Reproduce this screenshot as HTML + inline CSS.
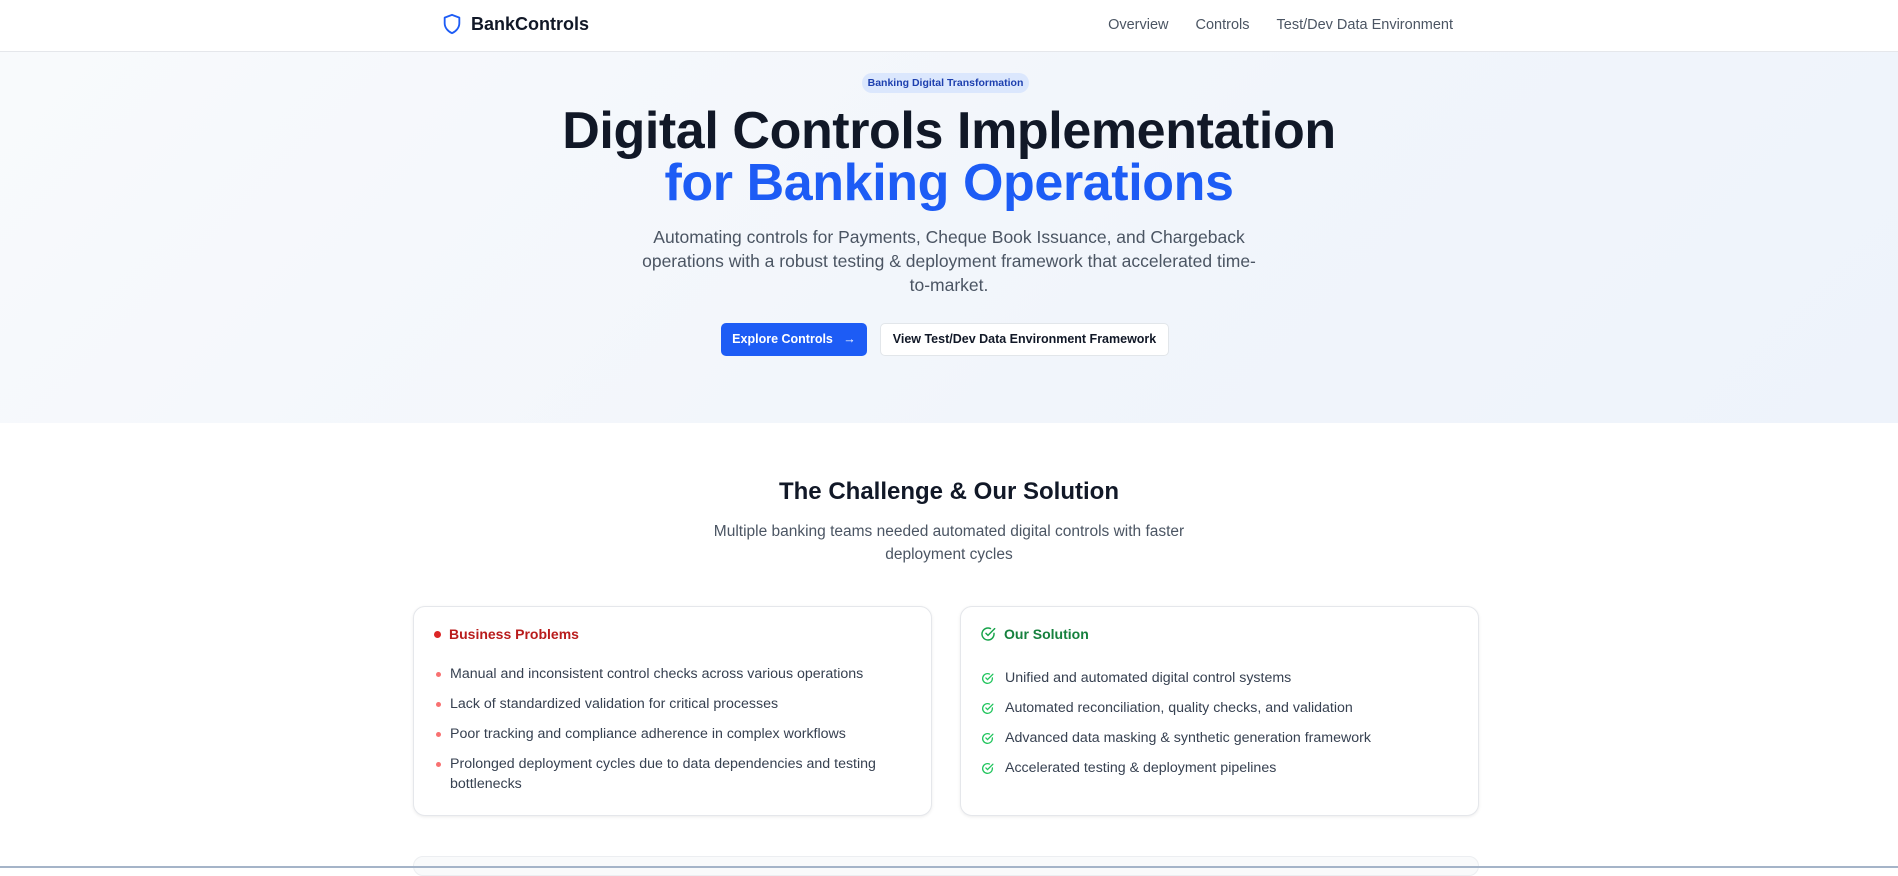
<!DOCTYPE html>
<html><head><meta charset="utf-8"><style>
*{box-sizing:border-box;margin:0;padding:0}
body{width:1898px;height:868px;overflow:hidden;font-family:"Liberation Sans",sans-serif;background:#fff;color:#111827;position:relative}
.nav{height:52px;border-bottom:1px solid #e5e7eb;background:#fff;position:relative}
.logo{position:absolute;left:441px;top:12px;display:flex;align-items:center;gap:8px;font-weight:700;font-size:18px;color:#111827}
.links{position:absolute;right:445px;top:17px;display:flex;gap:27px;font-size:14.5px;color:#4b5563}
.hero{height:371px;background:linear-gradient(135deg,#f8fafc 0%,#f1f5fb 60%,#eef3fb 100%);text-align:center;position:relative}
.badge{position:absolute;left:862px;top:21px;width:167px;height:20px;border-radius:10px;background:#dbe7fd;color:#1e40af;font-size:10.5px;font-weight:700;line-height:20px}
h1{position:absolute;left:0;right:0;top:53px;font-size:52px;line-height:52px;font-weight:700;color:#111827;letter-spacing:-0.4px}
h1 span{color:#1d5cf5}
.sub{position:absolute;left:600px;width:698px;top:173px;font-size:17.5px;line-height:24px;color:#4b5563}
.btn1{position:absolute;left:721px;top:271px;width:146px;height:33px;border-radius:5px;background:#1d5cf5;color:#fff;font-size:12.5px;font-weight:700;line-height:33px}
.btn2{position:absolute;left:880px;top:271px;width:289px;height:33px;border-radius:5px;background:#fff;border:1px solid #e2e6ea;color:#111827;font-size:12.5px;font-weight:700;line-height:31px}
h2{position:absolute;left:0;right:0;top:478px;font-size:24px;font-weight:700;text-align:center}
.s2{position:absolute;left:690px;width:518px;top:520px;font-size:15.5px;line-height:23px;color:#4b5563;text-align:center}
.card{position:absolute;top:606px;height:210px;width:519px;border:1px solid #e5e7eb;border-radius:12px;background:#fff;box-shadow:0 1px 3px rgba(0,0,0,.08)}
.card h3{position:absolute;left:36px;top:19px;font-size:14px;font-weight:700;display:flex;align-items:center;gap:8px}
.card ul{list-style:none;position:absolute;left:20px;top:57px;width:470px}
.card li{font-size:14.2px;line-height:20px;color:#374151;padding-left:16px;position:relative;margin-bottom:10px}
.l li::before{content:"";position:absolute;left:2px;top:8px;width:5px;height:5px;border-radius:50%;background:#f87171}
.r li{padding-left:24px}
.r li svg{position:absolute;left:0;top:4px}
</style></head><body>
<div class="nav">
<div class="logo"><svg width="22" height="24" viewBox="0 0 24 24" fill="none" stroke="#1d5cf5" stroke-width="2" stroke-linejoin="round"><path d="M12 2 4 5v6c0 5 3.5 9 8 11 4.5-2 8-6 8-11V5z"/></svg>BankControls</div>
<div class="links"><span>Overview</span><span>Controls</span><span>Test/Dev Data Environment</span></div>
</div>
<div class="hero">
<div class="badge">Banking Digital Transformation</div>
<h1>Digital Controls Implementation<br><span>for Banking Operations</span></h1>
<div class="sub">Automating controls for Payments, Cheque Book Issuance, and Chargeback<br>operations with a robust testing &amp; deployment framework that accelerated time-<br>to-market.</div>
<div class="btn1">Explore Controls &nbsp;&nbsp;→</div>
<div class="btn2">View Test/Dev Data Environment Framework</div>
</div>
<h2>The Challenge &amp; Our Solution</h2>
<div class="s2">Multiple banking teams needed automated digital controls with faster deployment cycles</div>
<div class="card l" style="left:413px">
<h3 style="color:#b91c1c;left:20px"><span style="width:7px;height:7px;border-radius:50%;background:#dc2626;display:inline-block"></span>Business Problems</h3>
<ul style="top:57px">
<li>Manual and inconsistent control checks across various operations</li>
<li>Lack of standardized validation for critical processes</li>
<li>Poor tracking and compliance adherence in complex workflows</li>
<li>Prolonged deployment cycles due to data dependencies and testing bottlenecks</li>
</ul></div>
<div class="card r" style="left:960px">
<h3 style="color:#15803d;left:19px"><svg width="16" height="16" viewBox="0 0 24 24" fill="none" stroke="#16a34a" stroke-width="2.2" stroke-linecap="round"><path d="M21 11v1a9 9 0 1 1-5.3-8.2"/><path d="m9 11 3 3L22 4"/></svg>Our Solution</h3>
<ul style="top:61px">
<li><svg width="13" height="13" viewBox="0 0 24 24" fill="none" stroke="#22c55e" stroke-width="2.4" stroke-linecap="round"><path d="M21 11v1a9 9 0 1 1-5.3-8.2"/><path d="m9 11 3 3L22 4"/></svg>Unified and automated digital control systems</li>
<li><svg width="13" height="13" viewBox="0 0 24 24" fill="none" stroke="#22c55e" stroke-width="2.4" stroke-linecap="round"><path d="M21 11v1a9 9 0 1 1-5.3-8.2"/><path d="m9 11 3 3L22 4"/></svg>Automated reconciliation, quality checks, and validation</li>
<li><svg width="13" height="13" viewBox="0 0 24 24" fill="none" stroke="#22c55e" stroke-width="2.4" stroke-linecap="round"><path d="M21 11v1a9 9 0 1 1-5.3-8.2"/><path d="m9 11 3 3L22 4"/></svg>Advanced data masking &amp; synthetic generation framework</li>
<li><svg width="13" height="13" viewBox="0 0 24 24" fill="none" stroke="#22c55e" stroke-width="2.4" stroke-linecap="round"><path d="M21 11v1a9 9 0 1 1-5.3-8.2"/><path d="m9 11 3 3L22 4"/></svg>Accelerated testing &amp; deployment pipelines</li>
</ul></div>
<div style="position:absolute;left:413px;top:856px;width:1066px;height:20px;border:1px solid #eceef1;border-radius:10px;background:#f9fafb"></div>
<div style="position:absolute;left:0;top:866px;width:1898px;height:2px;background:#a5b4c8"></div>
</body></html>
